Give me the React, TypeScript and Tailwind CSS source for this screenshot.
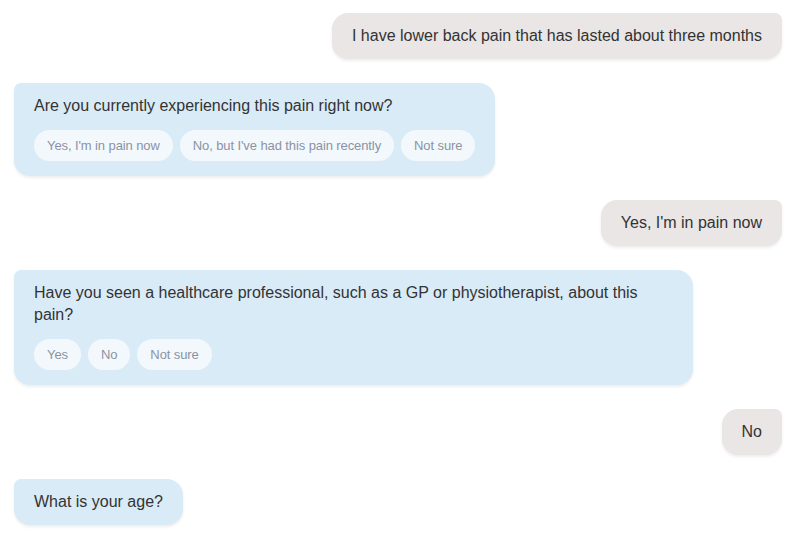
const font = { fontFamily: '"Liberation Sans", Arial, Helvetica, sans-serif' };

type Msg =
  | { from: "user"; text: string }
  | { from: "bot"; text: string; options?: string[] };

const messages: Msg[] = [
  { from: "user", text: "I have lower back pain that has lasted about three months" },
  {
    from: "bot",
    text: "Are you currently experiencing this pain right now?",
    options: ["Yes, I'm in pain now", "No, but I've had this pain recently", "Not sure"],
  },
  { from: "user", text: "Yes, I'm in pain now" },
  {
    from: "bot",
    text: "Have you seen a healthcare professional, such as a GP or physiotherapist, about this pain?",
    options: ["Yes", "No", "Not sure"],
  },
  { from: "user", text: "No" },
  { from: "bot", text: "What is your age?" },
];

function UserBubble({ text }: { text: string }) {
  return (
    <div className="flex justify-end">
      <div className="rounded-[16px] rounded-tr-[7px] bg-[#e9e6e5] px-5 py-3 text-[16px] leading-[22px] text-[#333333] shadow-[0_2px_3px_rgba(0,0,0,0.07)]">
        {text}
      </div>
    </div>
  );
}

function BotBubble({ text, options }: { text: string; options?: string[] }) {
  return (
    <div className="flex justify-start">
      <div className="max-w-[679px] rounded-[16px] rounded-tl-[7px] bg-[#d9ebf7] px-5 py-3 text-[#333333] shadow-[0_2px_3px_rgba(0,0,0,0.07)]">
        <p className="text-[16px] leading-[22px]">{text}</p>
        {options && (
          <div className="mt-[13px] mb-[3px] flex gap-[7px]">
            {options.map((o) => (
              <button
                key={o}
                className="flex h-[31px] items-center rounded-full bg-[#f3f8fc] px-[13px] text-[13px] tracking-[-0.1px] text-[#8a93a3]"
              >
                {o}
              </button>
            ))}
          </div>
        )}
      </div>
    </div>
  );
}

export default function App() {
  return (
    <div className="min-h-screen bg-white" style={font}>
      <div className="flex flex-col gap-6 pt-[13px] pl-[14px] pr-[15px]">
        {messages.map((m, i) =>
          m.from === "user" ? (
            <UserBubble key={i} text={m.text} />
          ) : (
            <BotBubble key={i} text={m.text} options={m.options} />
          )
        )}
      </div>
    </div>
  );
}
